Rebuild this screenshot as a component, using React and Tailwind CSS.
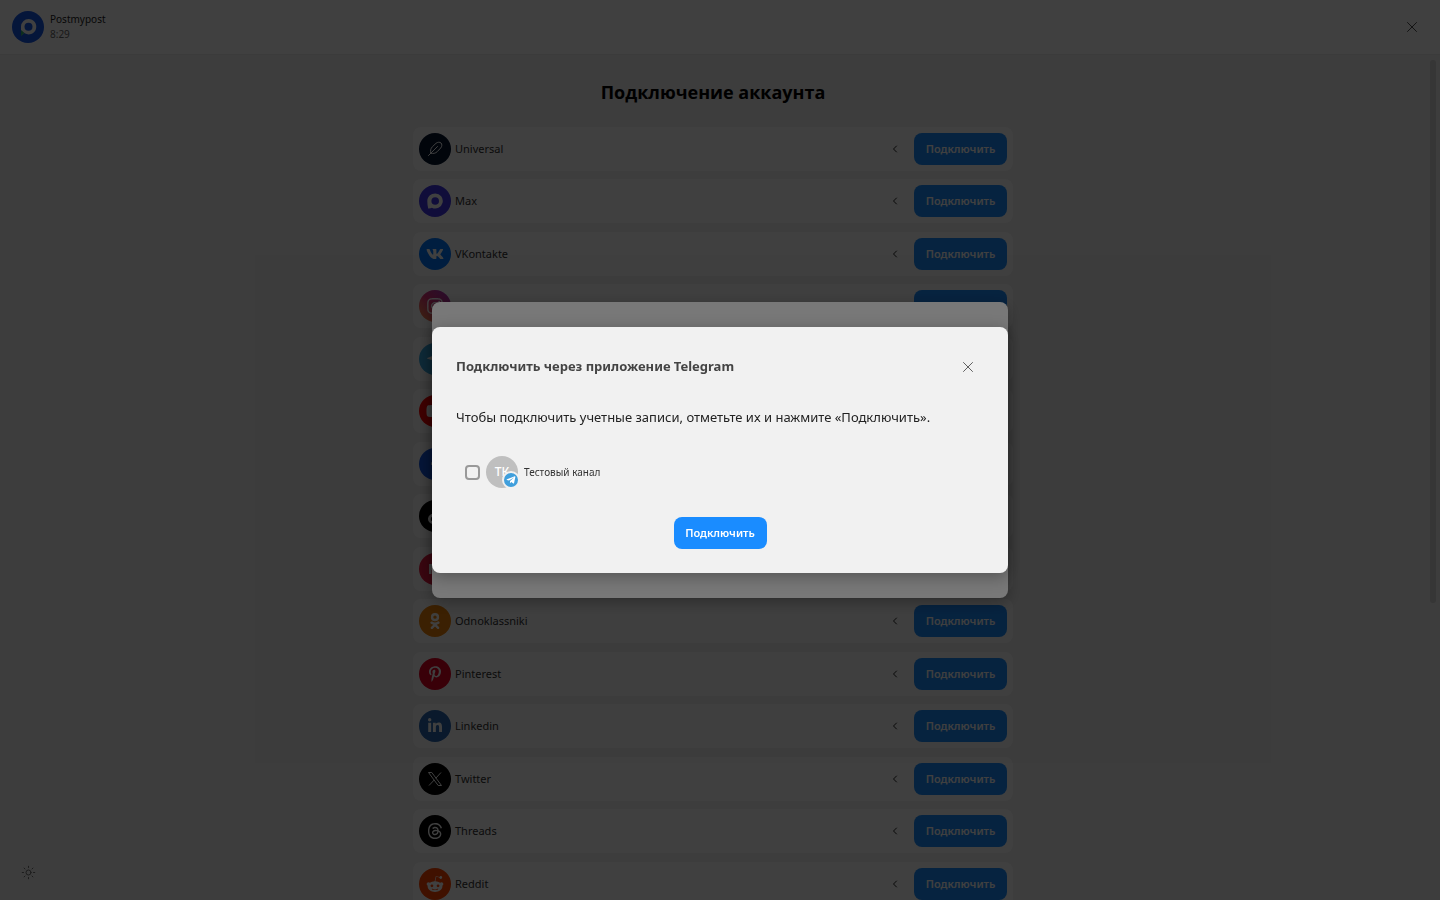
import React from "react";
import { SiOdnoklassniki, SiThreads } from "react-icons/si";
import {
  FaFacebookF,
  FaInstagram,
  FaLinkedinIn,
  FaPinterestP,
  FaRedditAlien,
  FaTelegramPlane,
  FaTiktok,
  FaVk,
  FaYoutube,
} from "react-icons/fa";
import { ChevronLeft, Sun, X } from "lucide-react";

const PostmypostLogo = () => (
  <svg viewBox="0 0 32 32" className="size-8" aria-hidden="true">
    <circle cx="16" cy="16" r="16" fill="#1757e8" />
    <path
      d="M16.500 8a7.700 7.700 0 1 1-4.200 14.100L9 24.600V15.500A7.700 7.700 0 0 1 16.500 8z"
      fill="#fff"
    />
    <path d="M9 19v6l3.600-3z" fill="#2fb574" />
    <circle cx="16.500" cy="15.700" r="4" fill="#1757e8" />
  </svg>
);

const QuillIcon = () => (
  <svg
    viewBox="0 0 16 16"
    className="size-4"
    fill="none"
    stroke="currentColor"
    strokeLinecap="round"
    strokeLinejoin="round"
    aria-hidden="true"
  >
    <path d="M1.500 14.500l2.300-2.300M3.800 12.200c-.6-2.400-.2-4.700 1.600-6.500L9 2.300C10.600 1 12.800.9 14 2s1.100 3.400-.3 5l-3.400 3.600c-1.800 1.800-4.100 2.200-6.500 1.600zM3.800 12.200l6.700-6.700" />
  </svg>
);

const MaxIcon = () => (
  <svg viewBox="0 0 20 20" className="size-5" aria-hidden="true">
    <path
      d="M10.300 2.500a7.500 7.500 0 1 1-3.400 14.200c-.9.500-2.200 1-3.700.8-.6-2.300-.9-4.800-.9-7.400 0-4.500 3.600-7.600 8-7.600z"
      fill="#fff"
    />
    <circle cx="10.200" cy="10" r="3.800" fill="#4136e6" />
  </svg>
);

const RutubeIcon = () => (
  <svg viewBox="0 0 16 16" className="size-4" aria-hidden="true">
    <path
      d="M2 3h9a3 3 0 0 1 1.500 5.600L14 13h-2.500L10 9H4.500v4H2z"
      fill="#fff"
    />
  </svg>
);

const TwitterIcon = () => (
  <svg
    viewBox="0 0 16 16"
    className="size-4"
    fill="none"
    stroke="currentColor"
    aria-hidden="true"
  >
    <path d="M1.500 1.500h3.300l9.700 13h-3.300zM14 1.500L8.700 7.300M7.300 8.900L2 14.500" />
  </svg>
);

const networks = [
  { name: "Universal", bg: "bg-[#04142f]", icon: <QuillIcon /> },
  { name: "Max", bg: "bg-[#4136e6]", icon: <MaxIcon /> },
  { name: "VKontakte", bg: "bg-[#0077ff]", icon: <FaVk size={18} /> },
  {
    name: "Instagram",
    bg: "bg-linear-to-tr from-[#fd8d32] via-[#dc2f74] to-[#a02bb8]",
    icon: <FaInstagram size={18} />,
  },
  { name: "Telegram", bg: "bg-[#37a6de]", icon: <FaTelegramPlane size={18} /> },
  { name: "YouTube", bg: "bg-[#ff0000]", icon: <FaYoutube size={18} /> },
  { name: "Facebook", bg: "bg-[#1254e0]", icon: <FaFacebookF size={14} /> },
  { name: "TikTok", bg: "bg-black", icon: <FaTiktok size={16} /> },
  { name: "Rutube", bg: "bg-[#e6193f]", icon: <RutubeIcon /> },
  { name: "Odnoklassniki", bg: "bg-[#ee8208]", icon: <SiOdnoklassniki size={16} /> },
  { name: "Pinterest", bg: "bg-[#e60023]", icon: <FaPinterestP size={16} /> },
  { name: "Linkedin", bg: "bg-[#2867b2]", icon: <FaLinkedinIn size={16} /> },
  { name: "Twitter", bg: "bg-black", icon: <TwitterIcon /> },
  { name: "Threads", bg: "bg-black", icon: <SiThreads size={16} /> },
  { name: "Reddit", bg: "bg-[#ff4500]", icon: <FaRedditAlien size={18} /> },
];

const ConnectButton = () => (
  <button
    type="button"
    className="h-8 min-w-[93px] rounded-lg bg-[#1a8cff] px-2 text-[11px] font-semibold text-white"
  >
    Подключить
  </button>
);

const NetworkRow = ({ name, bg, icon }) => (
  <li className="flex h-11 items-center rounded-lg bg-white px-1.5 odd:mb-2 even:mb-[9px]">
    <span
      className={`flex size-8 items-center justify-center rounded-full text-white ${bg}`}
    >
      {icon}
    </span>
    <span className="ml-1 flex-1 text-[11px] text-[#333333]">{name}</span>
    <button
      type="button"
      aria-label={`${name}: подробнее`}
      className="mr-3 flex size-3.5 items-center justify-center text-[#222222]"
    >
      <ChevronLeft size={12} strokeWidth={2} />
    </button>
    <ConnectButton />
  </li>
);

// Dimmed layer that centers a dialog over the page
const Overlay = ({ children }) => (
  <div className="fixed inset-0 flex items-center justify-center bg-black/50">
    {children}
  </div>
);

const TelegramDialog = () => (
  <div
    role="dialog"
    aria-labelledby="dialog-title"
    className="flex w-full max-w-xl flex-col rounded-lg bg-[#f1f1f1] p-6 shadow-[0_4px_16px_rgba(0,0,0,0.3)]"
  >
    <div className="flex items-center justify-between">
      <h2 id="dialog-title" className="text-[13px] font-bold text-[#444444]">
        Подключить через приложение Telegram
      </h2>
      <button
        type="button"
        aria-label="Закрыть"
        className="flex size-8 items-center justify-center text-[#555555]"
      >
        <X size={18} strokeWidth={1.25} />
      </button>
    </div>

    <p className="mt-6 text-[13px] leading-5 text-[#222222]">
      Чтобы подключить учетные записи, отметьте их и нажмите «Подключить».
    </p>

    <label className="mt-[29px] ml-[9px] flex items-center self-start">
      <input
        type="checkbox"
        className="size-[15px] appearance-none rounded border-2 border-[#999999] checked:bg-[#1a8cff]"
      />
      <span className="relative ml-1.5 flex size-8 items-center justify-center rounded-full bg-[#bfbfbf] text-xs font-medium text-white">
        ТК
        <span className="absolute -right-0.5 -bottom-px flex size-[18px] items-center justify-center rounded-full border-2 border-[#f1f1f1] bg-[#409fdc]">
          <FaTelegramPlane size={10} className="text-white" />
        </span>
      </span>
      <span className="ml-1.5 text-[10px] text-[#333333]">Тестовый канал</span>
    </label>

    <div className="mt-[29px] flex justify-center">
      <ConnectButton />
    </div>
  </div>
);

export default function App() {
  return (
    <div className="flex h-screen flex-col overflow-hidden bg-[#f1f1f1] font-['Noto_Sans',sans-serif]">
      <header className="flex h-[55px] shrink-0 items-center justify-between border-b border-[#ebebeb] bg-white px-3">
        <div className="flex items-center gap-1.5">
          <PostmypostLogo />
          <div className="text-[10px] leading-[15px]">
            <p className="text-[#222222]">Postmypost</p>
            <p className="text-[#666666]">8:29</p>
          </div>
        </div>
        <button
          type="button"
          aria-label="Закрыть"
          className="flex size-8 items-center justify-center text-[#444444]"
        >
          <X size={18} strokeWidth={1.25} />
        </button>
      </header>

      <div className="flex min-h-0 flex-1">
        <main className="flex-1 overflow-hidden">
          <h1 className="mt-[22px] mb-5 text-center font-['Open_Sans',sans-serif] text-lg leading-[30px] font-bold text-black">
            Подключение аккаунта
          </h1>
          <ul className="mx-auto max-w-[600px]">
            {networks.map((network) => (
              <NetworkRow key={network.name} {...network} />
            ))}
          </ul>
        </main>
        {/* Scrollbar */}
        <div className="w-3.5 px-1 py-[5px]">
          <div className="h-[65%] w-1.5 rounded-full bg-[#d6d6d6]" />
        </div>
      </div>

      <button
        type="button"
        aria-label="Сменить тему"
        className="fixed bottom-5 left-5 flex size-4 items-center justify-center text-[#666666]"
      >
        <Sun size={15} strokeWidth={1.5} />
      </button>

      <Overlay>
        <div className="h-74 w-full max-w-xl rounded-lg bg-[#f1f1f1] shadow-[0_4px_16px_rgba(0,0,0,0.3)]" />
      </Overlay>
      <Overlay>
        <TelegramDialog />
      </Overlay>
    </div>
  );
}
